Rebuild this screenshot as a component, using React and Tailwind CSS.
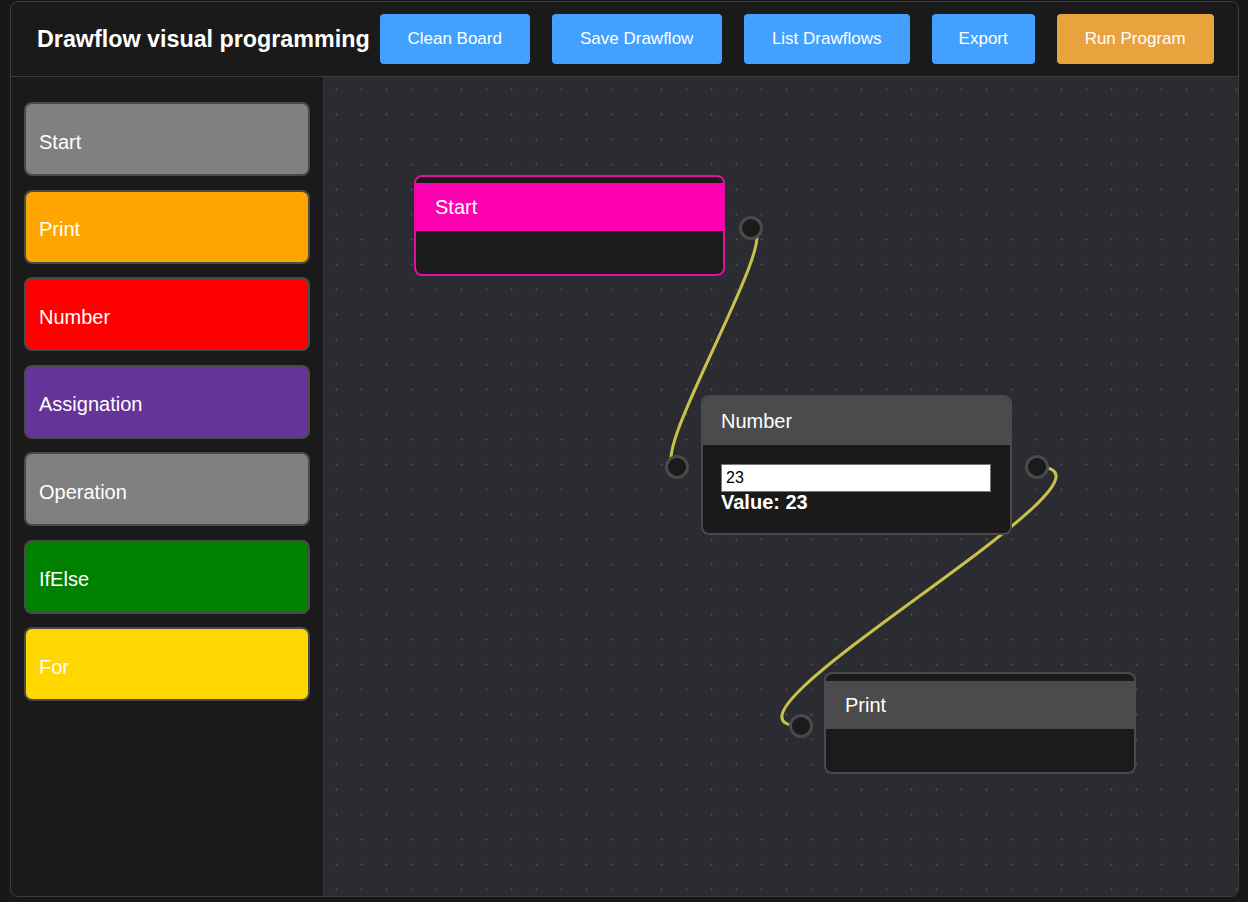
import React from "react";

const blocks = [
  { name: "Start", color: "bg-[#808080]" },
  { name: "Print", color: "bg-[#ffa500]" },
  { name: "Number", color: "bg-[#ff0000]" },
  { name: "Assignation", color: "bg-[#663399]" },
  { name: "Operation", color: "bg-[#808080]" },
  { name: "IfElse", color: "bg-[#008000]" },
  { name: "For", color: "bg-[#ffd700]" },
];

const buttons = [
  { label: "Clean Board", w: "w-[150px]", color: "bg-[#42a0ff]" },
  { label: "Save Drawflow", w: "w-[170px]", color: "bg-[#42a0ff]" },
  { label: "List Drawflows", w: "w-[166px]", color: "bg-[#42a0ff]" },
  { label: "Export", w: "w-[103px]", color: "bg-[#42a0ff]" },
  { label: "Run Program", w: "w-[157px]", color: "bg-[#e8a33e]" },
];

const Port = ({ className }) => (
  <div
    className={`absolute h-6 w-6 rounded-full border-[3px] border-[#4a4a4a] bg-[#1b1b1b] ${className}`}
  />
);

export default function App() {
  return (
    <div className="min-h-screen bg-[#181818] pt-px pl-[10px] font-['Liberation_Sans',Arial,sans-serif] text-white">
      <div className="flex h-[896px] w-[1229px] flex-col overflow-hidden rounded-lg border border-[#3c3c3c] bg-[#1a1a1a]">
        <header className="flex h-[75px] shrink-0 items-center border-b border-[#3c3c3c] pl-[26px]">
          <h1 className="text-[23.3px] font-bold">Drawflow visual programming</h1>
          <div className="ml-[10px] flex gap-[22px]">
            {buttons.map((b) => (
              <button
                key={b.label}
                className={`flex h-[50px] items-center justify-center rounded ${b.w} ${b.color} text-[17px] text-white`}>
                {b.label}
              </button>
            ))}
          </div>
        </header>

        <div className="flex min-h-0 flex-1">
          <aside className="flex w-[313px] shrink-0 flex-col gap-[13.5px] border-r border-[#333] px-[13px] pt-[25px]">
            {blocks.map((b) => (
              <div
                key={b.name}
                className={`flex h-[74px] items-center rounded-lg border-2 border-[#4a4a4a] pt-[5px] pl-[13px] text-[20px] ${b.color}`}>
                {b.name}
              </div>
            ))}
          </aside>

          <main className="relative flex-1 overflow-hidden bg-[#2b2c31]">
            <svg className="absolute inset-0 h-full w-full">
              <defs>
                <pattern id="grid" width="25" height="25" patternUnits="userSpaceOnUse">
                  <path d="M12.5 11v3M11 12.5h3" stroke="#45464c" strokeWidth="1" />
                </pattern>
              </defs>
              <rect width="100%" height="100%" fill="url(#grid)" />
              <path
                d="M427 151 C464 151 316 390 353 390"
                fill="none"
                stroke="#c9c24a"
                strokeWidth="3"
              />
              <path
                d="M713 390 C831 390 359 649 477 649"
                fill="none"
                stroke="#c9c24a"
                strokeWidth="3"
              />
            </svg>

            {/* Start node */}
            <div className="absolute top-[98px] left-[90px] flex h-[101px] w-[311px] flex-col overflow-hidden rounded-lg border-2 border-[#e0109f] bg-[#1b1b1b] pt-[6px]">
              <div className="flex h-[48px] items-center bg-[#ff00b0] pl-[19px] text-[20px]">Start</div>
            </div>

            {/* Number node */}
            <div className="absolute top-[318px] left-[377px] flex h-[140px] w-[311px] flex-col overflow-hidden rounded-lg border-2 border-[#4a4a4a] bg-[#1a1a1a]">
              <div className="flex h-[48px] shrink-0 items-center bg-[#4b4b4b] pl-[18px] text-[20px]">Number</div>
              <div className="px-[18px] pt-[19px]">
                <input
                  readOnly
                  value="23"
                  className="box-border h-[28px] w-[270px] border border-[#777] bg-white px-[4px] text-[16px] text-black outline-none"
                />
                <div className="-mt-px text-[20px] leading-[22px] font-bold">Value: 23</div>
              </div>
            </div>

            {/* Print node */}
            <div className="absolute top-[595px] left-[500px] flex h-[102px] w-[312px] flex-col overflow-hidden rounded-lg border-2 border-[#4a4a4a] bg-[#1b1b1b] pt-[7px]">
              <div className="flex h-[48px] items-center bg-[#4b4b4b] pl-[19px] text-[20px]">Print</div>
            </div>

            <Port className="top-[139px] left-[415px]" />
            <Port className="top-[378px] left-[341px]" />
            <Port className="top-[378px] left-[701px]" />
            <Port className="top-[637px] left-[465px]" />
          </main>
        </div>
      </div>
    </div>
  );
}
